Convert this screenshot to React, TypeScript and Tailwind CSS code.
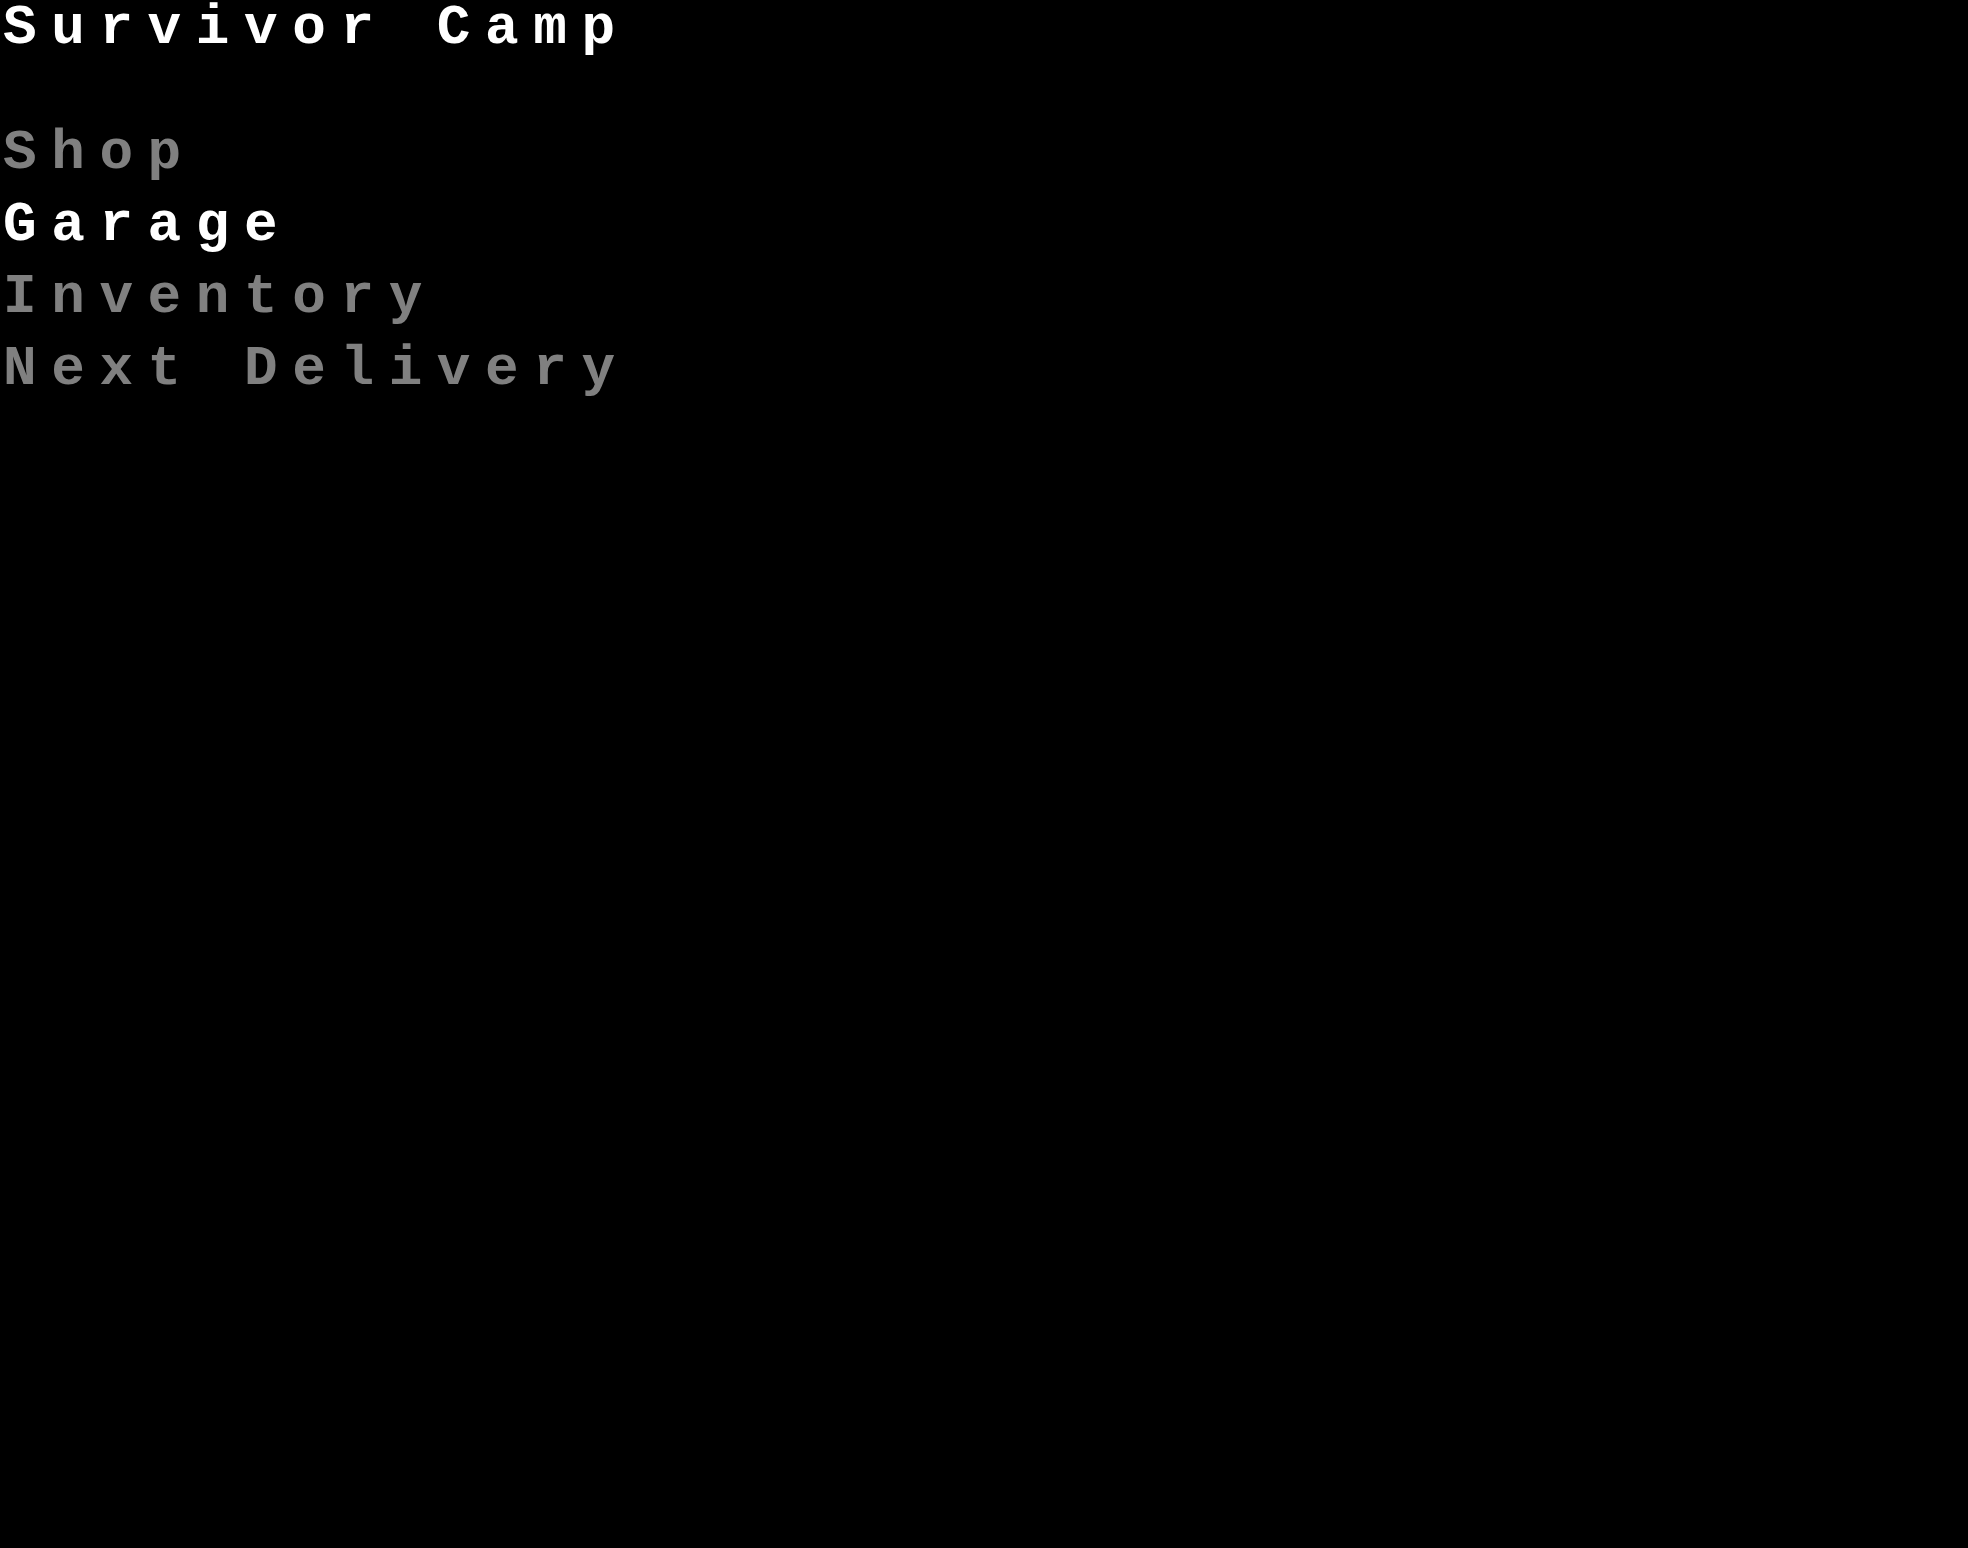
const menuItems = [
  { label: 'Shop', active: false },
  { label: 'Garage', active: true },
  { label: 'Inventory', active: false },
  { label: 'Next Delivery', active: false },
];

const App = () => {
  return (
    <div className="flex min-h-screen w-full flex-col bg-black pl-[3px] font-['Liberation_Mono',monospace] font-bold text-[56px] tracking-[14.6px]">
      <h1 className="text-white leading-[56px] whitespace-pre">Survivor Camp</h1>
      <ul className="mt-[61px] flex flex-col">
        {menuItems.map((item) => (
          <li
            key={item.label}
            className={`leading-[72px] whitespace-pre ${item.active ? 'text-white' : 'text-[#808080]'}`}
          >
            {item.label}
          </li>
        ))}
      </ul>
    </div>
  );
};

export default App;
